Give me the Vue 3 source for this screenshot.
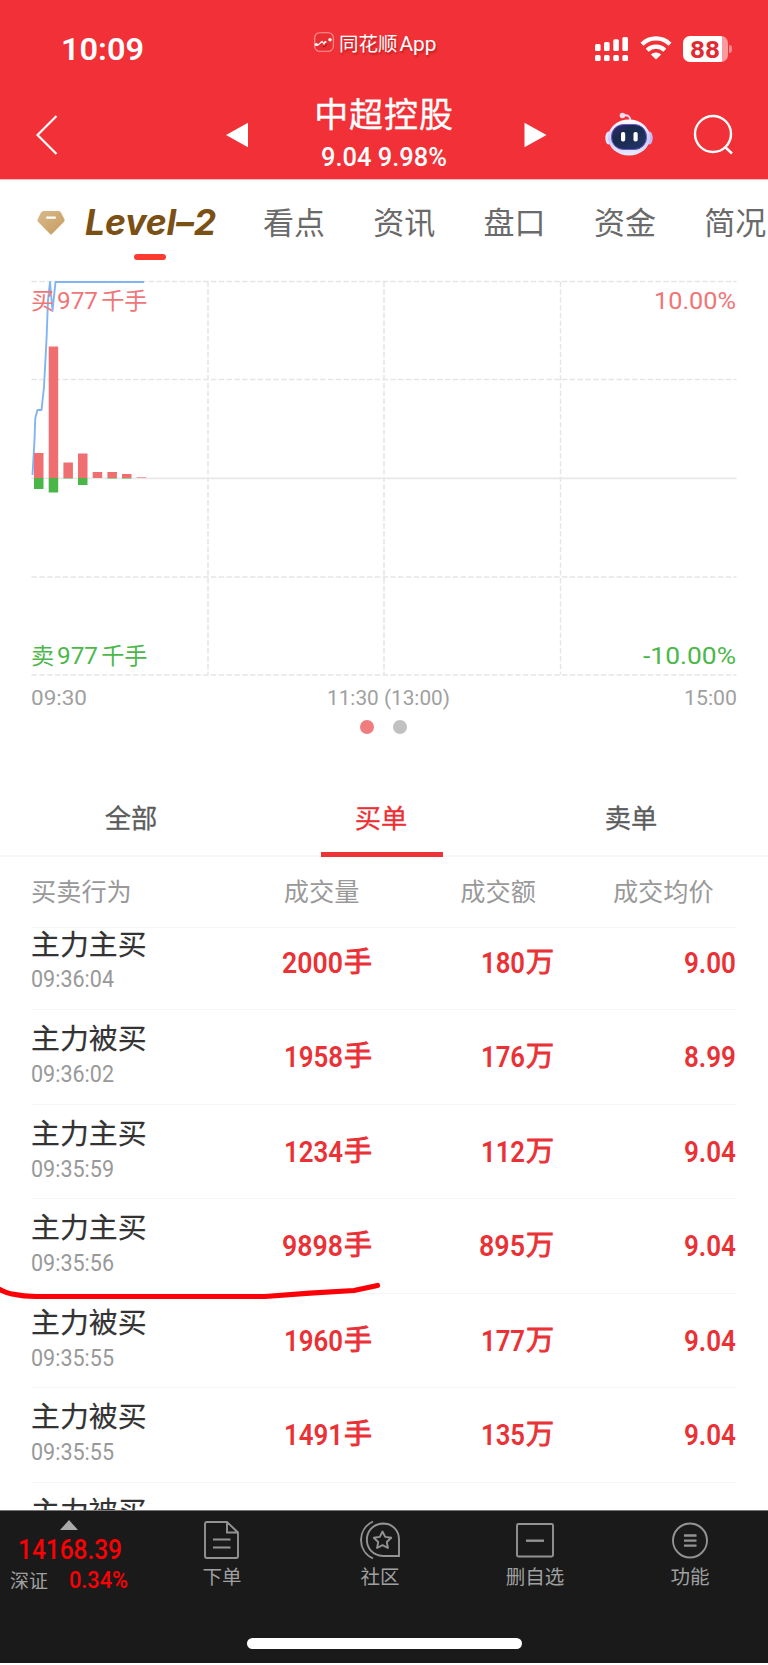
<script setup>
import { h } from 'vue'

// Numeric label: its box spans cap height to baseline and its text fills the width.
const Num = (p) =>
  h('svg', { class: 'num', width: p.w, height: p.h, viewBox: `0 0 ${p.w} ${p.h}` }, [
    h(
      'text',
      {
        x: -(p.b ?? 1),
        y: p.h,
        'font-size': p.h / (p.inter ? 0.727 : 0.711),
        'font-family': p.inter ? 'Inter, "Liberation Sans", sans-serif' : 'Roboto, "Liberation Sans", sans-serif',
        'font-weight': p.weight ?? 400,
        textLength: p.w + 2 * (p.b ?? 1),
        lengthAdjust: 'spacingAndGlyphs',
        fill: 'currentColor',
      },
      p.t
    ),
  ])
Num.props = ['t', 'w', 'h', 'b', 'weight', 'inter']

const tabs = ['看点', '资讯', '盘口', '资金', '简况']
const orders = [
  { name: '主力主买', time: '09:36:04', qty: '2000', amt: '180', price: '9.00' },
  { name: '主力被买', time: '09:36:02', qty: '1958', amt: '176', price: '8.99' },
  { name: '主力主买', time: '09:35:59', qty: '1234', amt: '112', price: '9.04' },
  { name: '主力主买', time: '09:35:56', qty: '9898', amt: '895', price: '9.04' },
  { name: '主力被买', time: '09:35:55', qty: '1960', amt: '177', price: '9.04' },
  { name: '主力被买', time: '09:35:55', qty: '1491', amt: '135', price: '9.04' },
]
const bars = [
  { x: 34, up: 25, down: 11 },
  { x: 48.7, up: 131.5, down: 14.5 },
  { x: 63.4, up: 15.5, down: 0.5 },
  { x: 78, up: 24.5, down: 7 },
  { x: 92.7, up: 6, down: 0 },
  { x: 107.4, up: 6, down: 0.5 },
  { x: 122, up: 4, down: 0.5 },
  { x: 136.7, up: 0.6, down: 0 },
]
</script>

<template>
  <div class="page">
    <header class="header">
      <div class="status">
        <Num class="clock" t="10:09" :w="81" :h="22" inter weight="600" />
        <svg class="app-icon" width="20" height="20" viewBox="0 0 20 20">
          <rect x=".7" y=".7" width="18.6" height="18.6" rx="5" fill="#e92d32" stroke="#ff9a9a" stroke-width="1.1" />
          <path d="M1 12.5l2.5.8 2-1.500 2.500-2.300 2 2.500 1-2.500" fill="none" stroke="#fff" stroke-width="1.2" />
          <path d="M9 14.5c2 .5 3-.5 3.600-2.200" fill="none" stroke="#7b1d20" stroke-width="1" />
          <circle cx="2.300" cy="12.600" r="1.500" fill="#fff" /><circle cx="16" cy="7.700" r="1.700" fill="#fff" />
          <circle cx="11.500" cy="10" r="1" fill="#fff" />
        </svg>
        <span class="app-name">同花顺<Num t="App" :w="36" :h="14" b="0.5" /></span>
        <svg class="signal" width="35" height="26" viewBox="0 0 35 26" fill="#fff">
          <rect x="1" y="8" width="5.600" height="7" rx="1.500" /><rect x="10" y="6" width="5.600" height="9" rx="1.500" />
          <rect x="19.300" y="3.300" width="5.600" height="11.700" rx="1.500" /><rect x="28.400" y="1" width="5.600" height="14" rx="1.500" />
          <rect x="1" y="19" width="5.600" height="6" rx="1.500" /><rect x="10" y="19" width="5.600" height="6" rx="1.500" />
          <rect x="19.300" y="19" width="5.600" height="6" rx="1.500" /><rect x="28.400" y="19" width="5.600" height="6" rx="1.500" />
        </svg>
        <svg class="wifi" width="32" height="24" viewBox="0 0 32 24">
          <path d="M2 8.200C10 .5 22 .5 30 8.200M7.200 14.200c5-4.800 12.600-4.800 17.600 0" fill="none" stroke="#fff" stroke-width="4.300" />
          <path d="M16 23.500l-5.200-5c3-2.700 7.400-2.700 10.400 0z" fill="#fff" />
        </svg>
        <div class="battery"><Num t="88" :w="28" :h="16.500" inter weight="700" b="1" /></div>
        <i class="battery-tip"></i>
      </div>
      <div class="title-bar">
        <svg class="back" width="22" height="42" viewBox="0 0 22 42"><path d="M20.500 2L1.500 21l19 19" fill="none" stroke="#fff" stroke-width="2.200" /></svg>
        <svg class="prev" width="23" height="26" viewBox="0 0 23 26"><path d="M0 13L22 .8v24.400z" fill="#fff" /></svg>
        <div class="title">
          <span class="stock">中超控股</span>
          <Num t="9.04 9.98%" :w="124" :h="18.500" weight="500" />
        </div>
        <svg class="next" width="23" height="26" viewBox="0 0 23 26"><path d="M22.500 13L.5 .8v24.400z" fill="#fff" /></svg>
        <svg class="robot" width="48" height="44" viewBox="0 0 48 44">
          <defs>
            <linearGradient id="shell" x1="0" y1="0" x2="0" y2="1"><stop offset="0" stop-color="#fff" /><stop offset=".55" stop-color="#cfc9fb" /><stop offset="1" stop-color="#e7ecff" /></linearGradient>
            <linearGradient id="visor" x1="0" y1="0" x2="1" y2="1"><stop offset="0" stop-color="#342b78" /><stop offset=".35" stop-color="#182a4c" /><stop offset="1" stop-color="#24366a" /></linearGradient>
          </defs>
          <path d="M18 3.500c5-1 7.300 1 7.300 5" fill="none" stroke="#f0dcff" stroke-width="1.800" />
          <circle cx="17.500" cy="3.500" r="2.800" fill="#fbdcec" />
          <ellipse cx="3.500" cy="26" rx="3.200" ry="6.500" fill="#dfe4ff" /><ellipse cx="44.500" cy="26" rx="3.200" ry="6.500" fill="#c5b9f6" />
          <ellipse cx="24" cy="25.500" rx="21" ry="18" fill="url(#shell)" />
          <rect x="6.500" y="12.500" width="35" height="25" rx="12" fill="url(#visor)" stroke="#6a55c4" stroke-width="1" />
          <rect x="16" y="20" width="4.200" height="9.500" rx="1.800" fill="#fff" /><rect x="28.500" y="20" width="4.200" height="9.500" rx="1.800" fill="#fff" />
        </svg>
        <svg class="search" width="42" height="42" viewBox="0 0 42 42"><g fill="none" stroke="#fff" stroke-width="2.400"><circle cx="20" cy="20" r="18" /><path d="M31.500 32.500l7.500 7" /></g></svg>
      </div>
    </header>

    <nav class="tabs">
      <svg class="gem" width="28" height="24" viewBox="0 0 28 24">
        <defs><linearGradient id="gold" x1="0" y1="0" x2="1" y2="1"><stop offset="0" stop-color="#d8b98c" /><stop offset="1" stop-color="#c89c5e" /></linearGradient></defs>
        <path d="M6.500 0h15Q23 0 24 1.500l3.500 7q.5 1.300-.5 2.300L15 23q-1 1-2 0L1 10.800Q0 9.800.5 8.500l3.500-7Q5 0 6.500 0z" fill="url(#gold)" />
        <rect x="9" y="5.500" width="10" height="2.200" rx="1" fill="#fff" />
      </svg>
      <div class="level">Level–2</div>
      <span v-for="t in tabs" :key="t" class="tab">{{ t }}</span>
    </nav>

    <section class="chart">
      <svg width="768" height="412" viewBox="0 270 768 412">
        <g fill="none" stroke="#e5e5e5" stroke-width="1.500" stroke-dasharray="5.500 2.300">
          <path d="M31.500 281.500h705M31.500 379.500h705M31.500 577h705M31.500 675h705M208 281.500v393M384 281.500v393M560.500 281.500v393" />
        </g>
        <path d="M31.500 478.300h705" stroke="#e8e8e8" stroke-width="1.700" />
        <path d="M32.500 475L34.500 440L35.300 418L37.500 410H41.500L44 387L46.500 340L48 300L50 282L52.500 311L55.500 282H144" fill="none" stroke="#82b4ef" stroke-width="1.900" stroke-linejoin="round" />
        <template v-for="b in bars" :key="b.x">
          <rect :x="b.x" :y="478 - b.up" width="9.500" :height="b.up" fill="#ef6f70" />
          <rect :x="b.x" y="478" width="9.500" :height="b.down" fill="#4bb648" />
        </template>
      </svg>
      <div class="scale top"><span>买<Num t="977" :w="39" :h="17" inter />千手</span><Num t="10.00%" :w="80" :h="17" inter /></div>
      <div class="scale bottom"><span>卖<Num t="977" :w="39" :h="17" inter />千手</span><Num t="-10.00%" :w="91" :h="17" inter /></div>
    </section>
    <div class="times">
      <Num t="09:30" :w="54" :h="14" inter /><Num class="noon" t="11:30 (13:00)" :w="121" :h="14" inter /><Num t="15:00" :w="51" :h="14" inter />
    </div>
    <div class="dots"><i class="on"></i><i></i></div>

    <nav class="filters"><span>全部</span><span class="active">买单</span><span>卖单</span></nav>
    <div class="cols"><span>买卖行为</span><span>成交量</span><span>成交额</span><span>成交均价</span></div>

    <main class="list">
      <div v-for="(o, i) in orders" :key="i" class="row">
        <div class="who"><span>{{ o.name }}</span><Num :t="o.time" :w="81" :h="17" /></div>
        <div class="val"><Num :t="o.qty" :w="o.qty[0] === '1' ? 57 : 59" :h="21.500" weight="600" /><span>手</span></div>
        <div class="val"><Num :t="o.amt" :w="o.amt[0] === '1' ? 42 : 44" :h="21.500" weight="600" /><span>万</span></div>
        <div class="val price"><Num :t="o.price" :w="50" :h="21.500" weight="600" /></div>
      </div>
      <div class="row"><div class="who"><span>主力被买</span></div></div>
      <svg class="mark" width="384" height="24" viewBox="0 1280 384 24"><path d="M-3 1288Q6 1293 12 1294Q24 1296.500 36 1296.500H265L310 1293.200L354 1290.500L377.500 1285.500" fill="none" stroke="#fb0006" stroke-width="5.200" stroke-linecap="round" stroke-linejoin="round" /></svg>
    </main>

    <footer class="footer">
      <div class="index">
        <svg class="tri" width="18" height="10" viewBox="0 0 18 10"><path d="M9 0l9 10H0z" fill="#aaa" /></svg>
        <Num class="red" t="14168.39" :w="102" :h="19.500" weight="500" />
        <div class="sub"><span>深证</span><Num class="red" t="0.34%" :w="57" :h="17" weight="500" /></div>
      </div>
      <div class="act a1">
        <svg width="36" height="38" viewBox="0 0 36 38"><g fill="none" stroke="#939393" stroke-width="1.900"><path d="M23 1H3Q1 1 1 3v32q0 2 2 2h29q2 0 2-2V11.500zM23 1v10.500h11M9 18.500h17.500M9 26.500h17.500" /></g></svg>
        <span>下单</span>
      </div>
      <div class="act a2">
        <svg width="40" height="40" viewBox="0 0 40 40"><g fill="none" stroke="#939393" stroke-width="1.900"><path d="M13 1.500C-3 9-3 31 13 38.500M23 3.500c9.500 0 16 7 16 16V36H23C1.500 35 1.500 4.500 23 3.500z" /><path d="M22.500 11.500l2.700 5.400 6 .9-4.400 4.200 1.100 6-5.400-2.800-5.400 2.800 1.100-6-4.400-4.200 6-.9z" stroke-linejoin="round" /></g></svg>
        <span>社区</span>
      </div>
      <div class="act a3">
        <svg width="38" height="38" viewBox="0 0 38 38"><g fill="none" stroke="#939393" stroke-width="1.900"><rect x="1" y="3" width="36" height="32.500" rx="1.500" /><path d="M10 19.700h18" stroke-width="2.400" /></g></svg>
        <span>删自选</span>
      </div>
      <div class="act a4">
        <svg width="38" height="38" viewBox="0 0 38 38"><g fill="none" stroke="#939393" stroke-width="1.900"><circle cx="19" cy="19.500" r="17" /><path d="M13 14.500h12.500M13 19.700h12.500M13 24.700h12.500" stroke-width="2.300" /></g></svg>
        <span>功能</span>
      </div>
      <div class="home"></div>
    </footer>
  </div>
</template>

<style>
body { margin: 0; background: #fff; }
</style>
<style scoped>
.page { width: 768px; height: 1665px; overflow: hidden; background: #fff; font-family: "Noto Sans CJK SC", sans-serif; display: flex; flex-direction: column; }
.page > * { flex: none; box-sizing: border-box; }
svg { display: block; flex: none; }
.num { display: inline-block; overflow: visible; }
span { line-height: 1; white-space: nowrap; }

.header { height: 180px; background: #f13137; color: #fff; border-bottom: 1px solid #fbb; }
.status { display: flex; align-items: flex-start; padding: 31px 0 0 62px; height: 92px; box-sizing: border-box; }
.clock { margin-top: 7px; }
.app-icon { margin: 1px 0 0 171px; }
.app-name { display: flex; align-items: flex-start; width: 98px; margin: 2px 0 0 5px; font-size: 19.5px; text-shadow: 1px 2px 2px #7006; }
.app-name .num { margin: 4px 0 0 2px; }
.signal { margin: 5px 0 0 157px; }
.wifi { margin: 5px 0 0 11px; }
.battery { width: 45px; height: 26px; margin: 5px 0 0 11px; border-radius: 7px; background: linear-gradient(90deg, #fff 39px, #f99a9c 39px); color: #df2b31; padding: 5px 0 0 8px; box-sizing: border-box; line-height: 0; }
.battery-tip { width: 3px; height: 8px; margin: 14px 0 0 1px; border-radius: 0 4px 4px 0; background: #f78b8e; }
.title-bar { display: flex; align-items: flex-start; }
.back { margin: 22px 0 0 36px; }
.prev { margin: 30px 0 0 168px; }
.title { width: 140px; margin: 4px 0 0 65px; display: flex; flex-direction: column; align-items: center; }
.stock { font-size: 34px; letter-spacing: 0.9px; margin-bottom: 17px; -webkit-text-stroke: 0.3px; }
.next { margin: 30px 0 0 70px; }
.robot { margin: 20px 0 0 58px; }
.search { margin: 22px 0 0 40px; }

.tabs { height: 90px; display: flex; align-items: flex-start; overflow: hidden; }
.gem { margin: 31px 0 0 37px; }
.level { position: relative; width: 130px; margin: 21px 0 0 20px; font: italic 700 35.5px/44px Inter, "Liberation Sans", sans-serif; color: #7b5014; letter-spacing: -0.1px; white-space: nowrap; }
.level::after { content: ""; position: absolute; left: 49px; top: 53px; width: 32px; height: 6px; border-radius: 3px; background: #fb3a30; }
.tab { width: 62px; margin: 25px 0 0 48.3px; font-size: 31px; color: #6a6a6a; flex: none; }
.level + .tab { margin-left: 48px; }

.chart { height: 412px; position: relative; font-size: 23.2px; }
.scale { position: absolute; left: 31px; right: 33px; display: flex; align-items: flex-start; justify-content: space-between; }
.scale span { display: flex; }
.scale span .num { margin: 4px 4px 0 4px; }
.scale > .num { margin-top: 4px; }
.top { top: 18px; color: #f07577; }
.bottom { top: 373px; color: #4cb84a; }
.times { height: 38px; padding: 9px 32px 0; display: flex; justify-content: space-between; color: #a0a0a0; }
.noon { position: relative; left: 2.5px; }
.dots { height: 38px; padding-right: 2px; display: flex; justify-content: center; gap: 19px; }
.dots i { width: 14px; height: 14px; border-radius: 7px; background: #c1c1c1; }
.dots .on { background: #f07d7d; }

.filters { height: 99px; border-bottom: 2px solid #f7f7f7; padding-left: 6px; display: flex; color: #5c5c5c; font-size: 26.3px; }
.filters span { width: 250px; flex: none; text-align: center; padding-top: 46px; height: 99px; box-sizing: border-box; position: relative; -webkit-text-stroke: 0.3px; }
.filters .active { color: #ec2f34; }
.filters .active::after { content: ""; position: absolute; left: 65px; top: 94px; width: 122px; height: 5px; background: #ec3338; }
.cols { height: 71px; margin: 0 31px; border-bottom: 1px solid #f6f6f6; padding-top: 21px; display: flex; color: #999; font-size: 25.2px; }
.cols span { flex: none; }
.cols span:nth-child(2) { margin-left: 152px; }
.cols span:nth-child(3) { margin-left: 101px; }
.cols span:nth-child(4) { margin-left: 77px; }

.list { height: 582px; overflow: hidden; position: relative; }
.row { height: 94.6px; margin: 0 31px; box-sizing: border-box; border-bottom: 1px solid #f6f6f6; display: grid; grid-template-columns: 200px 141px 182px 182px; }
.row:first-child { margin-top: -12.500px; }
.who { color: #333; font-size: 28.9px; display: flex; flex-direction: column; align-items: flex-start; padding: 12px 0 0 0; -webkit-text-stroke: 0.2px; }
.who .num { color: #999; margin: 14px 0 0 1px; -webkit-text-stroke: 0; }
.val { color: #e93136; display: flex; justify-content: flex-end; font-size: 28px; padding-top: 35px; }
.val span { margin: -5px 0 0 2px; height: 28px; -webkit-text-stroke: 0.9px; }
.price { padding-right: 1px; }
.mark { position: absolute; left: 0; top: 352px; }

.footer { height: 153px; background: #1a1a1a; border-top: 1px solid #777; position: relative; display: flex; color: #a0a0a0; font-size: 19.5px; }
.index { width: 140px; padding-top: 9px; line-height: 0; }
.tri { margin: 0 0 9px 60px; }
.index > .num { margin-left: 19px; }
.sub { display: flex; padding: 11px 0 0 10px; }
.sub span { width: 60px; font-size: 19px; line-height: 1; }
.red { color: #fb0005; }
.sub .num { margin-top: 1px; }
.act { display: flex; flex-direction: column; align-items: center; padding-top: 9px; width: 80px; }
.act svg { height: 40px; }
.act span { margin-top: 6px; }
.a1 { margin-left: 42px; }
.a2 { margin-left: 78px; }
.a3 { margin-left: 75px; }
.a4 { margin-left: 75px; }
.home { position: absolute; left: 247px; top: 127px; width: 275px; height: 11px; border-radius: 6px; background: #fff; }
</style>
